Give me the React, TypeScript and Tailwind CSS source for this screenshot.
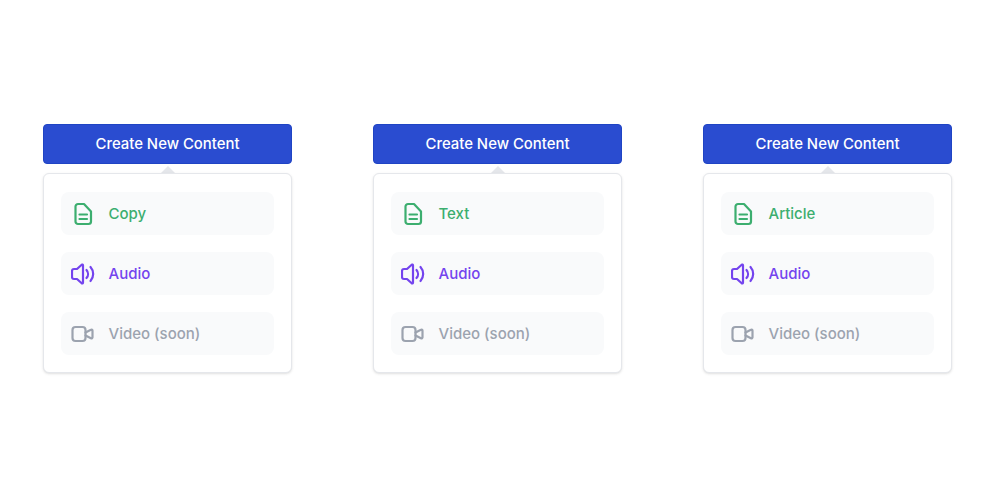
function FileIcon() {
  return (
    <svg width="24" height="24" viewBox="0 0 24 24" fill="none" stroke="currentColor" strokeWidth="2.2" strokeLinecap="round" strokeLinejoin="round">
      <path d="M4.500 4.500A2.500 2.500 0 0 1 7 2h6L20 9.500v10a2.500 2.500 0 0 1-2.500 2.500H7a2.500 2.500 0 0 1-2.500-2.500z" />
      <path d="M8.500 12.500h7.500M8.500 17h7.500" />
    </svg>
  );
}

function AudioIcon() {
  return (
    <svg width="24" height="24" viewBox="0 0 24 24" fill="none" stroke="currentColor" strokeWidth="2.2" strokeLinecap="round" strokeLinejoin="round">
      <path d="M12 3.300v17.400a.8.8 0 0 1-1.300.6L6 17H3a2 2 0 0 1-2-2V9a2 2 0 0 1 2-2h3l4.700-4.300a.8.8 0 0 1 1.300.6z" />
      <path d="M15.500 8a6 6 0 0 1 0 8" />
      <path d="M19.500 5a10.500 10.500 0 0 1 0 14" />
    </svg>
  );
}

function VideoIcon() {
  return (
    <svg width="24" height="24" viewBox="0 0 24 24" fill="none" stroke="currentColor" strokeWidth="2.2" strokeLinecap="round" strokeLinejoin="round">
      <rect x="1.500" y="5" width="13" height="14" rx="3" />
      <path d="M14.500 10.500l5.500-2.800a1 1 0 0 1 1.500.9v6.800a1 1 0 0 1-1.500.9l-5.500-2.800" />
    </svg>
  );
}

function Row({ icon, label, color }: { icon: React.ReactNode; label: string; color: string }) {
  return (
    <div className={`flex h-[43px] items-center gap-[13.500px] rounded-lg bg-[#f9fafb] pl-[10px] text-[15px] font-[550] ${color}`}>
      {icon}
      <span className="pt-[2px]">{label}</span>
    </div>
  );
}

function Card({ first }: { first: string }) {
  return (
    <div className="flex w-[249px] flex-col">
      <button className="h-[40px] rounded border border-[#1f44c4] bg-[#2a4cd0] pt-[1px] text-[14.900px] font-[550] text-white">
        Create New Content
      </button>
      <div className="mx-auto mt-[2px] h-0 w-0 border-x-[7px] border-b-[7px] border-x-transparent border-b-[#e5e7eb]" />
      <div className="flex h-[200px] flex-col gap-[17px] rounded-md border border-[#e5e7eb] bg-white px-[17px] pt-[18px] shadow-sm">
        <Row icon={<FileIcon />} label={first} color="text-[#3cae6f]" />
        <Row icon={<AudioIcon />} label="Audio" color="text-[#7444ee]" />
        <Row icon={<VideoIcon />} label="Video (soon)" color="text-[#9ca3af]" />
      </div>
    </div>
  );
}

export default function App() {
  return (
    <div className="flex h-[500px] w-[1000px] items-start gap-[81px] bg-white pl-[43px] pt-[124px] font-['Inter',sans-serif]">
      <Card first="Copy" />
      <Card first="Text" />
      <Card first="Article" />
    </div>
  );
}
